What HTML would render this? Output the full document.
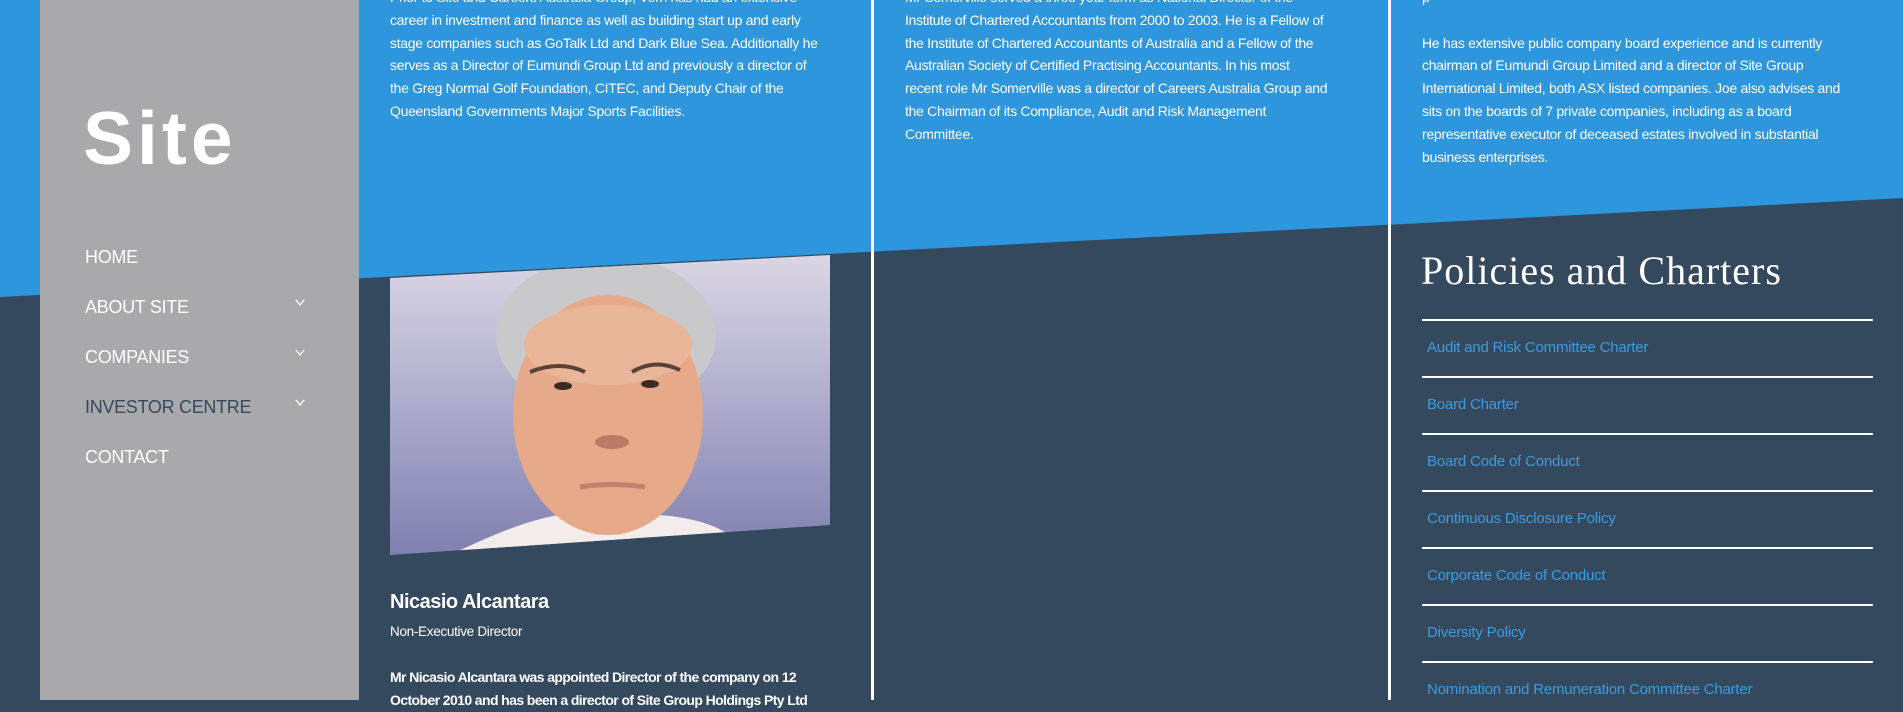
<!DOCTYPE html>
<html><head><meta charset="utf-8"><style>
*{margin:0;padding:0;box-sizing:border-box}
body{width:1903px;height:700px;overflow:hidden;position:relative;background:#34495e;font-family:"Liberation Sans",sans-serif}
.abs{position:absolute}
.txt{color:#fff;font-size:14px;line-height:22.8px;letter-spacing:-0.3px;white-space:nowrap}
.nav{position:absolute;left:85px;color:#fff;font-size:18px;letter-spacing:-0.3px}
.chev{position:absolute;left:295px}
.rule{position:absolute;left:1422px;width:451px;height:1.5px;background:#fff}
.lnk{position:absolute;left:1427px;color:#3a9ce2;font-size:15px;letter-spacing:-0.2px}
</style></head><body>
<svg class="abs" style="left:0;top:0" width="1903" height="700">
<polygon points="0,0 1903,0 1903,198 0,297" fill="#2e96dc"/>
<defs><linearGradient id="bg" x1="0" y1="0" x2="0" y2="1"><stop offset="0" stop-color="#dcd8e6"/><stop offset="1" stop-color="#7f7fb0"/></linearGradient>
<clipPath id="cp"><polygon points="390,278 830,255 830,525 390,555"/></clipPath></defs>
<g clip-path="url(#cp)">
<rect x="390" y="250" width="440" height="310" fill="url(#bg)"/>
<path d="M440,560 Q520,520 560,515 L660,515 Q720,520 740,545 L740,560Z" fill="#f3ecea"/>
<ellipse cx="606" cy="335" rx="110" ry="80" fill="#c9c9cc"/>
<ellipse cx="608" cy="415" rx="95" ry="120" fill="#e6a98a"/>
<ellipse cx="608" cy="345" rx="84" ry="40" fill="#eab699"/>
<path d="M530,372 Q560,360 585,372" stroke="#5a4035" stroke-width="4" fill="none"/>
<path d="M632,372 Q655,358 680,370" stroke="#5a4035" stroke-width="4" fill="none"/>
<ellipse cx="563" cy="386" rx="9" ry="4" fill="#3a2a25"/>
<ellipse cx="650" cy="384" rx="9" ry="4" fill="#3a2a25"/>
<ellipse cx="612" cy="442" rx="17" ry="7" fill="#b97a66"/>
<path d="M580,487 Q612,482 645,487" stroke="#c77e70" stroke-width="5" fill="none"/>
</g>
<rect x="871" y="0" width="3" height="700" fill="#fff"/>
<rect x="1388" y="0" width="3" height="700" fill="#fff"/>
</svg>
<div class="abs" style="left:83px;top:0;width:0;height:0"></div>
<div class="abs" style="left:40px;top:0;width:319px;height:700px;background:#a9a9ab"></div>
<div class="abs" style="left:83px;top:95px;color:#fff;font-size:75px;font-weight:bold;letter-spacing:4px">Site</div>
<div class="nav" style="top:247px">HOME</div>
<div class="nav" style="top:297px">ABOUT SITE</div>
<div class="nav" style="top:347px">COMPANIES</div>
<div class="nav" style="top:397px;color:#34495e">INVESTOR CENTRE</div>
<div class="nav" style="top:447px">CONTACT</div>
<svg class="chev" style="top:299px" width="10" height="8"><path d="M1,1 L5,6 L9,1" stroke="#fff" stroke-width="1.3" fill="none"/></svg>
<svg class="chev" style="top:349px" width="10" height="8"><path d="M1,1 L5,6 L9,1" stroke="#fff" stroke-width="1.3" fill="none"/></svg>
<svg class="chev" style="top:399px" width="10" height="8"><path d="M1,1 L5,6 L9,1" stroke="#fff" stroke-width="1.3" fill="none"/></svg>

<div class="abs txt" style="left:390px;top:-14px">Prior to Site and Careers Australia Group, Vern has had an extensive<br>career in investment and finance as well as building start up and early<br>stage companies such as GoTalk Ltd and Dark Blue Sea. Additionally he<br>serves as a Director of Eumundi Group Ltd and previously a director of<br>the Greg Normal Golf Foundation, CITEC, and Deputy Chair of the<br>Queensland Governments Major Sports Facilities.</div>
<div class="abs txt" style="left:905px;top:-14px">Mr Somerville served a three year term as National Director of the<br>Institute of Chartered Accountants from 2000 to 2003. He is a Fellow of<br>the Institute of Chartered Accountants of Australia and a Fellow of the<br>Australian Society of Certified Practising Accountants. In his most<br>recent role Mr Somerville was a director of Careers Australia Group and<br>the Chairman of its Compliance, Audit and Risk Management<br>Committee.</div>
<div class="abs txt" style="left:1422px;top:-14px">p<br><br>He has extensive public company board experience and is currently<br>chairman of Eumundi Group Limited and a director of Site Group<br>International Limited, both ASX listed companies. Joe also advises and<br>sits on the boards of 7 private companies, including as a board<br>representative executor of deceased estates involved in substantial<br>business enterprises.</div>

<div class="abs" style="left:390px;top:591px;color:#fff;font-size:20px;font-weight:bold;letter-spacing:-0.5px">Nicasio Alcantara</div>
<div class="abs" style="left:390px;top:624px;color:#fff;font-size:13.5px;letter-spacing:-0.3px">Non-Executive Director</div>
<div class="abs txt" style="left:390px;top:666px;font-weight:bold;letter-spacing:-0.6px">Mr Nicasio Alcantara was appointed Director of the company on 12<br>October 2010 and has been a director of Site Group Holdings Pty Ltd</div>

<div class="abs" style="left:1421px;top:247px;color:#fff;font-family:'Liberation Serif',serif;font-size:40px;letter-spacing:1px">Policies and Charters</div>
<div class="rule" style="top:319px"></div>
<div class="lnk" style="top:339px">Audit and Risk Committee Charter</div>
<div class="rule" style="top:376px"></div>
<div class="lnk" style="top:396px">Board Charter</div>
<div class="rule" style="top:433px"></div>
<div class="lnk" style="top:453px">Board Code of Conduct</div>
<div class="rule" style="top:490px"></div>
<div class="lnk" style="top:510px">Continuous Disclosure Policy</div>
<div class="rule" style="top:547px"></div>
<div class="lnk" style="top:567px">Corporate Code of Conduct</div>
<div class="rule" style="top:604px"></div>
<div class="lnk" style="top:624px">Diversity Policy</div>
<div class="rule" style="top:661px"></div>
<div class="lnk" style="top:681px">Nomination and Remuneration Committee Charter</div>
</body></html>
